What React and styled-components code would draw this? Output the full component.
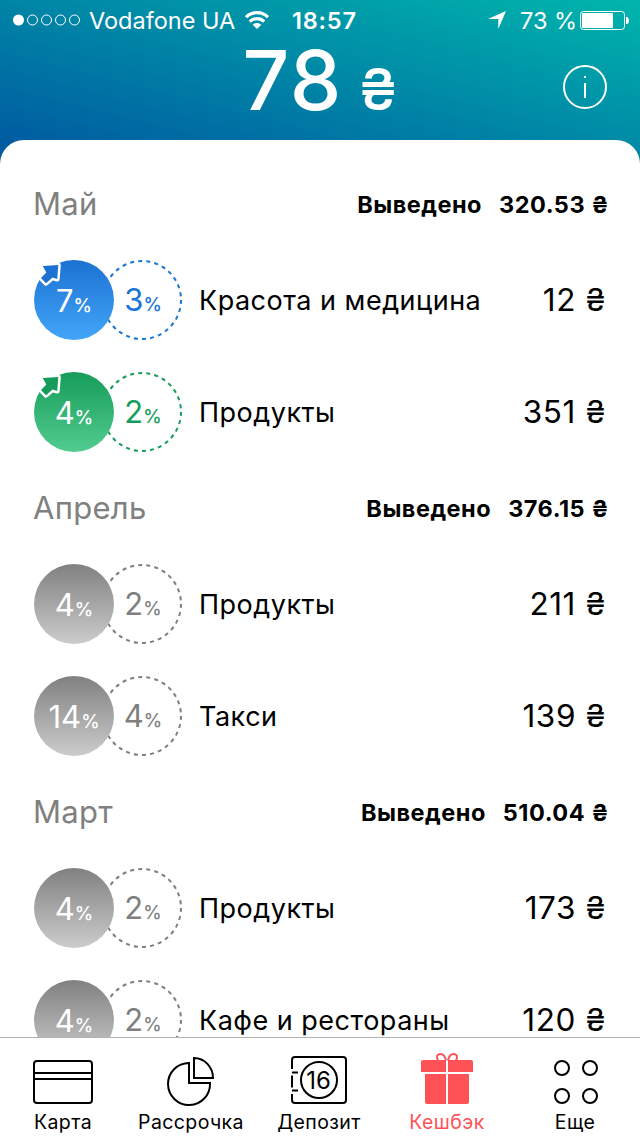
import React from 'react';
import styled, { createGlobalStyle } from 'styled-components';

const GlobalStyle = createGlobalStyle`
  * {
    box-sizing: border-box;
  }

  body {
    margin: 0;
    background: #fff;
    color: #000;
    font-family: Inter, "Liberation Sans", sans-serif;
  }
`;

const themes = {
  blue: { from: '#1c72d2', to: '#42a5f8', ring: '#1976d4' },
  green: { from: '#169c59', to: '#52cc90', ring: '#169d59' },
  gray: { from: '#808080', to: '#cccccc', ring: '#7f7f7f' },
};

const months = [
  {
    name: 'Май',
    paid: '320.53',
    items: [
      { theme: 'blue', rate: 7, base: 3, title: 'Красота и медицина', amount: 12, boosted: true },
      { theme: 'green', rate: 4, base: 2, title: 'Продукты', amount: 351, boosted: true },
    ],
  },
  {
    name: 'Апрель',
    paid: '376.15',
    items: [
      { theme: 'gray', rate: 4, base: 2, title: 'Продукты', amount: 211 },
      { theme: 'gray', rate: 14, base: 4, title: 'Такси', amount: 139 },
    ],
  },
  {
    name: 'Март',
    paid: '510.04',
    items: [
      { theme: 'gray', rate: 4, base: 2, title: 'Продукты', amount: 173 },
      { theme: 'gray', rate: 4, base: 2, title: 'Кафе и рестораны', amount: 120 },
    ],
  },
];

const Screen = styled.div`
  display: flex;
  flex-direction: column;
  width: 640px;
  height: 1136px;
  overflow: hidden;
  background: linear-gradient(to top right, #0055a0, #00b5ac) 0 0 / 640px 164px no-repeat;
`;

const StatusBar = styled.div`
  display: flex;
  align-items: center;
  flex: 0 0 40px;
  padding: 0 11px 0 13px;
  color: #fff;
  font-size: 23.5px;

  svg {
    flex: none;
  }
`;

const Carrier = styled.span`
  flex: none;
  margin-left: 8px;
  width: 156px;
  white-space: nowrap;
`;

const Clock = styled.span`
  flex: none;
  margin-left: 23px;
  width: 196px;
  font-weight: 600;
  letter-spacing: 0.8px;
`;

const BatteryText = styled.span`
  flex: none;
  margin-left: 14px;
  width: 60px;
  white-space: nowrap;
`;

const Header = styled.header`
  display: grid;
  grid-template-columns: 1fr auto 1fr;
  flex: 0 0 100px;
  padding: 0 33px;
  color: #fff;
`;

const Balance = styled.div`
  grid-column: 2;
  display: flex;
  align-items: baseline;
  gap: 16px;
  font-size: 82px;
  font-weight: 450;
  line-height: 81px;
  letter-spacing: 1.5px;
`;

const Currency = styled.span`
  font-size: 58px;
  font-weight: 500;
  letter-spacing: 0;
`;

const InfoButton = styled.button`
  justify-self: end;
  width: 44px;
  height: 44px;
  margin-top: 25px;
  padding: 0;
  border: 0;
  background: none;
`;

const Sheet = styled.main`
  flex: 1;
  min-height: 0;
  overflow: hidden;
  padding: 24px 33px 0;
  border-radius: 24px 24px 0 0;
  background: #fff;
`;

const MonthHead = styled.div`
  display: flex;
  align-items: center;
  justify-content: space-between;
  height: 80px;
`;

const MonthName = styled.h2`
  margin: -2px 0 0;
  color: #808080;
  font-size: 31px;
  font-weight: 400;
  letter-spacing: 0.3px;
`;

const Paid = styled.div`
  display: flex;
  gap: 17px;
  margin-right: -2px;
  font-size: 23.5px;
  font-weight: 700;
  letter-spacing: 0.5px;
`;

const Row = styled.div`
  display: flex;
  align-items: center;
  height: 112px;
`;

const Badges = styled.div`
  display: flex;
  position: relative;
  width: 149px;
  height: 80px;
  margin-left: 1px;
`;

const Rate = styled.div`
  display: flex;
  align-items: baseline;
  justify-content: center;
  position: relative;
  width: 80px;
  height: 80px;
  padding-top: 1px;
  border-radius: 50%;
  background: ${p => `linear-gradient(${p.$theme.from}, ${p.$theme.to})`};
  color: #fff;
  font-size: 31px;
  line-height: 80px;
`;

const BaseRate = styled(Rate)`
  margin-left: -11px;
  padding-top: 0;
  background: none;
  color: ${p => p.$theme.ring};
`;

const Percent = styled.span`
  font-size: 18.5px;
  font-weight: 500;
`;

const RingSvg = styled.svg`
  position: absolute;
  top: 0;
  left: 68px;
`;

const BoostSvg = styled.svg`
  position: absolute;
  top: 0;
  left: 0;
`;

const Title = styled.div`
  flex: 1;
  margin-left: 16px;
  font-size: 27px;
  letter-spacing: 0.5px;
`;

const Amount = styled.div`
  margin-top: -2px;
  padding-right: 1px;
  font-size: 31.5px;
  letter-spacing: 0.6px;
`;

const TabBar = styled.nav`
  display: flex;
  flex: 0 0 99px;
  border-top: 1px solid #b2b2b2;
  background: #fff;
`;

const Tab = styled.div`
  display: flex;
  flex-direction: column;
  align-items: center;
  width: 128px;
  padding: 13px 2px 0 0;
  color: ${p => (p.$active ? '#ff5257' : '#000')};
  font-size: 19.5px;
  letter-spacing: 0.4px;
  line-height: 24px;

  svg {
    margin-bottom: 2px;
  }
`;

const SignalIcon = () => (
  <svg width="68" height="12" viewBox="0 0 68 12">
    <circle cx="5.5" cy="6" r="5.5" fill="#fff" />
    {[19.5, 33.5, 47.5, 61.5].map(cx => (
      <circle key={cx} cx={cx} cy="6" r="5" fill="none" stroke="#fff" />
    ))}
  </svg>
);

const WifiIcon = () => (
  <svg width="24" height="18" viewBox="0 0 24 18" fill="none" stroke="#fff" strokeWidth="3.2">
    <path d="M1 6.2a15.6 15.6 0 0 1 22 0" />
    <path d="M4.8 10.6a10.2 10.2 0 0 1 14.4 0" />
    <path d="M12 18l-4.3-4.3a6.1 6.1 0 0 1 8.6 0z" fill="#fff" stroke="none" />
  </svg>
);

const LocationIcon = () => (
  <svg width="18" height="18" viewBox="0 0 18 18">
    <path d="M18 0L10.3 18V8H0z" fill="#fff" />
  </svg>
);

const BatteryIcon = () => (
  <svg width="49" height="19" viewBox="0 0 49 19">
    <rect x="0.5" y="0.5" width="44" height="18" rx="3" fill="none" stroke="#fff" />
    <rect x="2" y="2" width="31" height="15" rx="1" fill="#fff" />
    <path d="M46 6h1.5q1.5 1.5 1.5 3.5t-1.5 3.5H46z" fill="#fff" />
  </svg>
);

const InfoIcon = () => (
  <svg width="44" height="44" viewBox="0 0 44 44" fill="none" stroke="#fff" strokeWidth="2">
    <circle cx="22" cy="22" r="21" />
    <path d="M22 18v15M22 11v2" />
  </svg>
);

const BoostIcon = ({ color }) => (
  <BoostSvg width="30" height="30" viewBox="0 0 30 30">
    <path
      d="M8.7 6L24.3 5L23.2 19L18.5 17.5L12 23.2L7 18L12.3 12.5z"
      fill={color}
      stroke="#fff"
      strokeWidth="5"
      strokeLinejoin="round"
      paintOrder="stroke"
    />
  </BoostSvg>
);

const CardIcon = () => (
  <svg width="60" height="57" viewBox="0 0 60 57" fill="none" stroke="#000" strokeWidth="2">
    <rect x="1" y="10" width="58" height="42" rx="3" />
    <path d="M1 22h58M1 28h58" />
  </svg>
);

const PieIcon = () => (
  <svg width="48" height="57" viewBox="0 0 48 57" fill="none" stroke="#000" strokeWidth="2">
    <path d="M22 12A21 21 0 1 0 43 32H22z" />
    <path d="M27 7A19 20 0 0 1 46 27H27z" />
  </svg>
);

const DepositText = styled.text`
  font-size: 24px;
  letter-spacing: 0;
`;

const DepositIcon = () => (
  <svg width="56" height="57" viewBox="0 0 56 57" fill="none" stroke="#000" strokeWidth="2">
    <path d="M1 18V9q0-3 3-3H52q3 0 3 3V49q0 3-3 3H4q-3 0-3-3V43M1 24.5v12M1 21.5h6M1 39.5h6" />
    <circle cx="28" cy="29" r="18" />
    <DepositText x="27.5" y="38" textAnchor="middle" fill="#000" stroke="none">16</DepositText>
  </svg>
);

const GiftIcon = () => (
  <svg width="52" height="57" viewBox="0 0 52 57" fill="#ff5257">
    <path d="M2 9H25V21H0V11q0-2 2-2zM27 9H50q2 0 2 2V21H27zM4 23H25V53H6q-2 0-2-2zM27 23H48V51q0 2-2 2H27z" />
    <path
      d="M25 9.5C24 5 22 3 19.5 3C16 3 15 6 17 9.5M27 9.5C28 5 30 3 32.5 3C36 3 37 6 35 9.5"
      fill="none"
      stroke="#ff5257"
      strokeWidth="2"
    />
  </svg>
);

const MoreIcon = () => (
  <svg width="46" height="57" viewBox="0 0 46 57" fill="none" stroke="#000" strokeWidth="2">
    <circle cx="10" cy="17" r="7" />
    <circle cx="38" cy="17" r="7" />
    <circle cx="10" cy="45" r="7" />
    <circle cx="38" cy="45" r="7" />
  </svg>
);

const CashbackRow = ({ item }) => {
  const theme = themes[item.theme];
  return (
    <Row>
      <Badges>
        <RingSvg width="80" height="80" viewBox="0 0 80 80">
          <circle cx="40" cy="40" r="39" fill="none" stroke={theme.ring} strokeWidth="2" strokeDasharray="4 4.168" />
        </RingSvg>
        <Rate $theme={theme}>
          {item.rate}<Percent>%</Percent>
          {item.boosted && <BoostIcon color={theme.from} />}
        </Rate>
        <BaseRate $theme={theme}>
          {item.base}<Percent>%</Percent>
        </BaseRate>
      </Badges>
      <Title>{item.title}</Title>
      <Amount>{item.amount} ₴</Amount>
    </Row>
  );
};

const App = () => (
  <>
    <GlobalStyle />
    <Screen>
      <StatusBar>
        <SignalIcon />
        <Carrier>Vodafone UA</Carrier>
        <WifiIcon />
        <Clock>18:57</Clock>
        <LocationIcon />
        <BatteryText>73 %</BatteryText>
        <BatteryIcon />
      </StatusBar>
      <Header>
        <Balance>78 <Currency>₴</Currency></Balance>
        <InfoButton><InfoIcon /></InfoButton>
      </Header>
      <Sheet>
        {months.map(month => (
          <section key={month.name}>
            <MonthHead>
              <MonthName>{month.name}</MonthName>
              <Paid>
                <span>Выведено</span>
                <span>{month.paid} ₴</span>
              </Paid>
            </MonthHead>
            {month.items.map(item => (
              <CashbackRow key={item.title} item={item} />
            ))}
          </section>
        ))}
      </Sheet>
      <TabBar>
        <Tab><CardIcon />Карта</Tab>
        <Tab><PieIcon />Рассрочка</Tab>
        <Tab><DepositIcon />Депозит</Tab>
        <Tab $active><GiftIcon />Кешбэк</Tab>
        <Tab><MoreIcon />Еще</Tab>
      </TabBar>
    </Screen>
  </>
);

export default App;
